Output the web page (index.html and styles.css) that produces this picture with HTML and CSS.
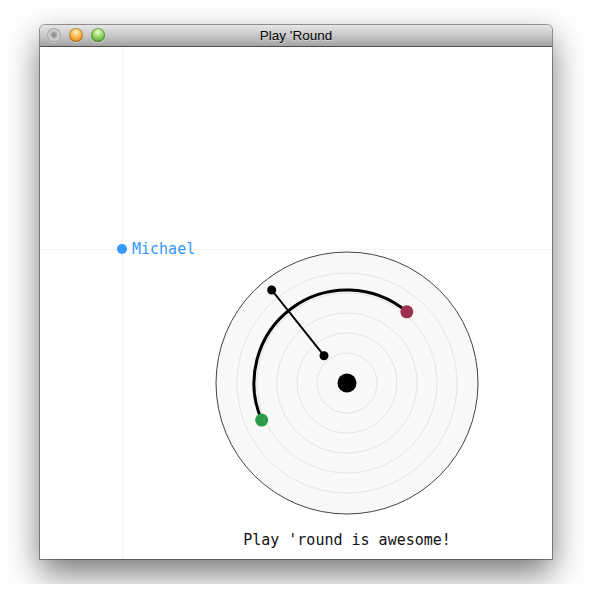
FILE: index.html
```html
<!DOCTYPE html>
<html lang="en">
<head>
    <meta charset="UTF-8">
    <title>Play 'Round</title>
    <link rel="stylesheet" href="styles.css">
</head>
<body>
    <div class="window">
        <div class="titlebar">
            <div class="lights">
                <span class="light disabled"></span>
                <span class="light minimize"></span>
                <span class="light zoom"></span>
            </div>
            <div class="title">Play 'Round</div>
        </div>

        <div class="content">
            <svg class="board" width="512" height="512" viewBox="0 0 512 512">
                <!-- crosshair for the player -->
                <line class="guide" x1="82.5" y1="0" x2="82.5" y2="512"/>
                <line class="guide" x1="0" y1="202.5" x2="512" y2="202.5"/>
                <circle class="player-dot" cx="82" cy="202" r="5"/>
                <text class="player-name" x="92" y="207">Michael</text>

                <!-- the round -->
                <circle class="dial" cx="307" cy="336" r="131"/>
                <circle class="ring" cx="307" cy="336" r="30"/>
                <circle class="ring" cx="307" cy="336" r="50"/>
                <circle class="ring" cx="307" cy="336" r="70"/>
                <circle class="ring" cx="307" cy="336" r="90"/>
                <circle class="ring" cx="307" cy="336" r="110"/>

                <path class="track" d="M 221.7 373.1 A 93 93 0 0 1 366.8 264.8"/>
                <line class="hand" x1="231.7" y1="243" x2="284" y2="308.7"/>
                <circle class="knob" cx="231.7" cy="243" r="4.5"/>
                <circle class="knob" cx="284" cy="308.7" r="4.5"/>

                <circle class="hub" cx="307" cy="336" r="9.5"/>
                <circle class="start" cx="221.7" cy="373.1" r="6.5"/>
                <circle class="end" cx="366.8" cy="264.8" r="6.5"/>

                <text class="caption" x="307" y="498">Play 'round is awesome!</text>
            </svg>
        </div>
    </div>
</body>
</html>
```

FILE: styles.css
```css
* {
    box-sizing: border-box;
    margin: 0;
    padding: 0;
}

body {
    background: white;
    padding: 25px 40px;
    font-family: "Liberation Sans", Arial, sans-serif;
}

.window {
    width: 512px;
    background: white;
    border-radius: 5px 5px 0 0;
    box-shadow: 0 0 0 1px rgba(0, 0, 0, 0.38), 0 14px 34px rgba(0, 0, 0, 0.55);
}

.titlebar {
    position: relative;
    height: 22px;
    display: flex;
    align-items: center;
    justify-content: center;
    background: linear-gradient(#e6e6e6, #c8c8c8 50%, #a4a4a4);
    border-bottom: 1px solid #4d4d4d;
    border-radius: 5px 5px 0 0;
}

.lights {
    position: absolute;
    left: 7px;
    top: 3px;
    display: flex;
    gap: 8px;
}

.light {
    width: 14px;
    height: 14px;
    border-radius: 50%;
    box-shadow: inset 0 0 0 1px rgba(0, 0, 0, 0.25), 0 1px 0 rgba(255, 255, 255, 0.4);
}

.light.disabled {
    background: radial-gradient(circle at 50% 50%, #8a8a8a 0, #9a9a9a 2px, #c9c9c9 4px, #dcdcdc 7px);
}

.light.minimize {
    background: radial-gradient(circle at 50% 30%, #fff3c0 0, #f7b442 45%, #d5661c 100%);
}

.light.zoom {
    background: radial-gradient(circle at 50% 30%, #e8ffd0 0, #8fd45a 45%, #3d8e1f 100%);
}

.title {
    font-size: 13.5px;
    color: #000;
    text-shadow: 0 1px 0 rgba(255, 255, 255, 0.45);
}

.content {
    height: 512px;
    background: white;
}

.board {
    display: block;
}

.guide {
    stroke: #f4f4f4;
    stroke-width: 1;
}

.player-dot {
    fill: #3399ff;
}

.player-name,
.caption {
    font-family: "DejaVu Sans Mono", monospace;
    font-size: 15px;
}

.player-name {
    fill: #3399ff;
}

.caption {
    fill: #111;
    text-anchor: middle;
}

.dial {
    fill: #f8f8f8;
    stroke: #444;
    stroke-width: 1;
}

.ring {
    fill: none;
    stroke: #e3e3e3;
    stroke-width: 1;
}

.track {
    fill: none;
    stroke: black;
    stroke-width: 3;
}

.hand {
    stroke: black;
    stroke-width: 2;
}

.knob,
.hub {
    fill: black;
}

.start {
    fill: #2e9a4a;
}

.end {
    fill: #9e3050;
}
```
